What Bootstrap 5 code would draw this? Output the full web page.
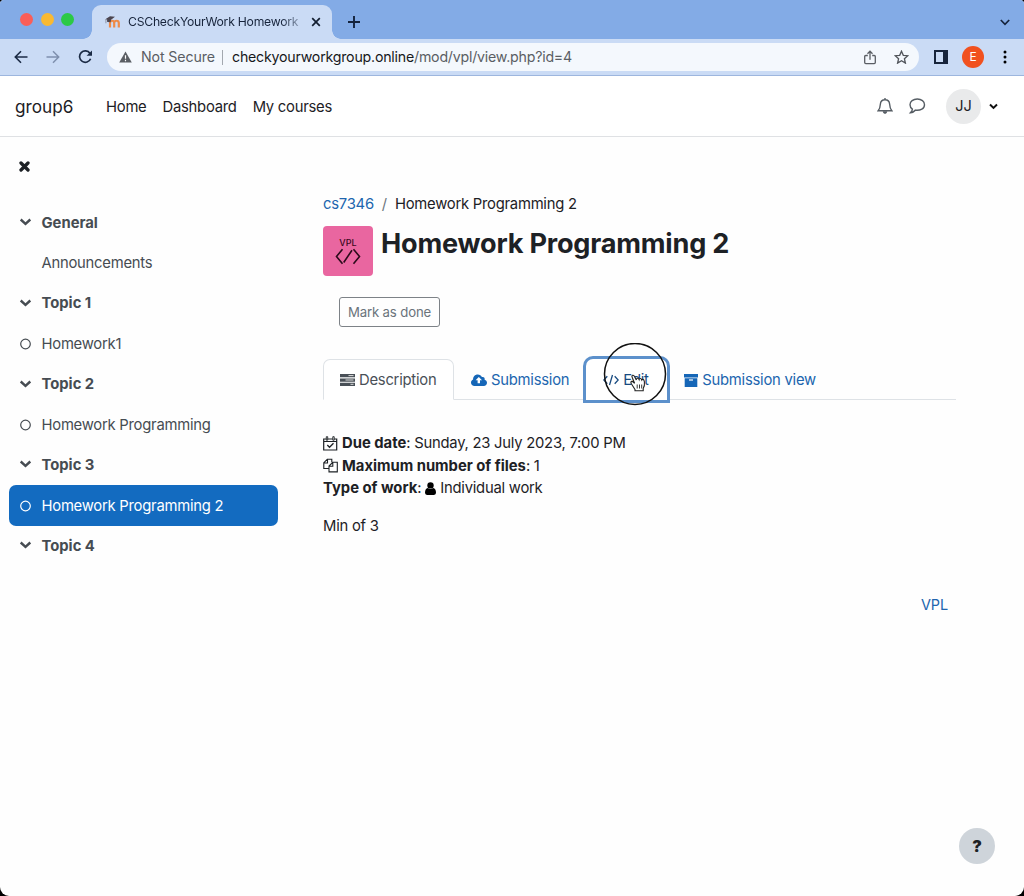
<!DOCTYPE html>
<html lang="en">
<head>
<meta charset="utf-8">
<title>CSCheckYourWork Homework</title>
<link href="https://cdn.jsdelivr.net/npm/bootstrap@5.3.0/dist/css/bootstrap.min.css" rel="stylesheet">
<style>
body{font-family:Inter,"Liberation Sans",sans-serif;font-size:14.8px;line-height:22.3px;letter-spacing:-.24px;color:#1d2125;background:#000;height:896px;overflow:hidden}
b,.fw-bold{letter-spacing:0}
svg{display:block;flex:none}
a{text-decoration:none}
.window{height:896px;background:#fefefe;border-radius:4px 4px 9px 9px;overflow:hidden}
.tabstrip{height:39px;background:#83abe6;padding-left:20px}
.light-dot{width:13px;height:13px;border-radius:50%}
.browser-tab{height:34px;width:240px;margin-left:18px;background:#cadbf5;border-radius:9px 9px 0 0;padding-left:13px;font-size:12.2px;color:#17243b;position:relative}
.browser-tab::before,.browser-tab::after{content:"";position:absolute;bottom:0;width:9px;height:9px}
.browser-tab::before{left:-9px;background:radial-gradient(circle at 0 0,transparent 8.5px,#cadbf5 9px)}
.browser-tab::after{right:-9px;background:radial-gradient(circle at 100% 0,transparent 8.5px,#cadbf5 9px)}
.tab-title{width:174px;margin-left:7px;white-space:nowrap;-webkit-mask-image:linear-gradient(90deg,#000 88%,transparent 104%)}
.toolbar{height:37px;background:#cadbf5;border-bottom:1px solid #9db6de;padding-left:14px}
.address{width:812px;height:28px;border-radius:14px;background:#f4f8fd;padding-left:12px;font-size:14.2px;letter-spacing:-.22px;color:#5a5e64}
.profile-dot{width:22px;height:22px;border-radius:50%;background:#f1511f;color:#fff;font-size:12px}
.site-nav{height:61px;border-bottom:1px solid #dfe1e4;padding-left:15px;background:#fff}
.site-nav>span:not(.initials){padding-top:2px}
.brand{font-size:17.2px;width:91px;letter-spacing:0}
.initials{width:35px;height:35px;background:#e9eaeb;font-size:14.5px;letter-spacing:0}
.drawer{width:286px;padding:21px 9px 0;color:#464c52}
.index-row{height:40.38px;padding-left:10px;border-radius:7px}
.index-row .mark-slot{width:13px;margin-right:9.5px;flex:none}
.index-row:not(.fw-bold) span:last-child{padding-top:1px}
.index-row.current{background:#136bc0;color:#fff;width:268.500px}
.content-area{width:633px;margin-left:37px;padding-top:56px}
.blue{color:#2065ae}
.vpl-tile{width:50px;height:50px;border-radius:4px;background:#e966a0}
.page-title{font-size:27.1px;line-height:36px;font-weight:700;letter-spacing:-.2px}
.done-btn{width:101px;height:30px;border:1px solid #7d8287;border-radius:3px;color:#6a737b;font-size:13.2px;letter-spacing:-.15px;margin:20px 0 0 16px}
.tabs-row{height:40.500px;margin-top:32px;border-bottom:1px solid #dee2e6}
.tab-item{height:41px;gap:4px;padding-top:1px}
.tab-item.selected{width:131px;padding-left:16px;border:1px solid #dee2e6;border-bottom-color:#fff;border-radius:7px 7px 0 0;color:#495057;background:#fff}
.tab-item.focused{width:81px;height:41px;margin-left:17px;padding-left:17px;border-radius:7px 7px 0 0;box-shadow:0 0 0 3px #5c90cb;color:#174a80}
.pointer-ring{position:absolute;left:603px;top:343px;z-index:3}
.help-btn{position:absolute;left:959px;top:828px;width:36px;height:36px;border-radius:50%;background:#ced4da;font-size:16px;font-weight:900;padding-top:1px}
</style>
</head>
<body>
<div class="window">
  <div class="tabstrip d-flex align-items-center">
    <div class="d-flex" style="gap:7.5px">
      <span class="light-dot" style="background:#fa5e58"></span>
      <span class="light-dot" style="background:#f9b932"></span>
      <span class="light-dot" style="background:#2bc945"></span>
    </div>
    <div class="browser-tab d-flex align-items-center align-self-end">
      <svg width="16" height="14" viewBox="0 0 16 14"><path d="M5 12.500V8c0-3 4.200-3 4.200 0v4.500M9.200 8c0-3 4.600-3 4.600 0v4.500" fill="none" stroke="#ee8b48" stroke-width="2.200"/><path d="M.3 4.300 5 1.200l5 .5-4.600 3.600zM2 4.500l4 .3-.4 2.400-3.400-.3z" fill="#4c4650"/><path d="M.9 4.300v4" stroke="#6a6570" stroke-width=".6"/></svg>
      <span class="tab-title">CSCheckYourWork Homework</span>
      <svg style="margin-left:9px" width="10" height="10" viewBox="0 0 10 10"><path d="m1.200 1.200 7.600 7.600m0-7.600L1.200 8.800" stroke="#131e30" stroke-width="1.700"/></svg>
    </div>
    <svg style="margin:5px 0 0 16px" width="12" height="12" viewBox="0 0 12 12"><path d="M6 0v12M0 6h12" stroke="#14233d" stroke-width="1.900"/></svg>
    <svg class="ms-auto" style="margin:5px 14px 0 0" width="10" height="7" viewBox="0 0 10 7"><path d="m.8 1 4.200 4.300L9.200 1" fill="none" stroke="#15233b" stroke-width="1.700"/></svg>
  </div>
  <div class="toolbar d-flex align-items-center">
    <svg width="14" height="14" viewBox="0 0 14 14"><path d="M13.500 7H1.500M7 1.300 1.300 7 7 12.700" fill="none" stroke="#1b2b45" stroke-width="1.600"/></svg>
    <svg style="margin-left:18px" width="14" height="14" viewBox="0 0 14 14"><path d="M.5 7h12M7 1.300 12.700 7 7 12.700" fill="none" stroke="#7f90ae" stroke-width="1.500"/></svg>
    <svg style="margin-left:18px" width="15" height="14" viewBox="0 0 15 14"><path d="M12.600 8.700A5.700 5.700 0 1 1 12 3.400" fill="none" stroke="#1b2b45" stroke-width="1.700"/><path d="M14 .4v5.400H8.600z" fill="#1b2b45"/></svg>
    <div class="address d-flex align-items-center" style="margin-left:14px">
      <svg width="13" height="12" viewBox="0 0 13 12"><path d="M6.500.4 12.800 11.600H.2z" fill="#5a5e64"/><path d="M6.500 4.200v3.600M6.500 8.800v1.400" stroke="#fff" stroke-width="1.200"/></svg>
      <span style="margin-left:9px;width:81px;white-space:nowrap;letter-spacing:-.13px">Not Secure</span>
      <span style="width:1px;height:15px;background:#a3a8af"></span>
      <span style="margin-left:9px"><span style="color:#17191c">checkyourworkgroup.online</span>/mod/vpl/view.php?id=4</span>
      <svg class="ms-auto" width="12" height="15" viewBox="0 0 12 15"><path d="M3.800 5.500H1.800Q.7 5.500.7 6.600v6q0 1.100 1.100 1.100h8.400q1.100 0 1.100-1.100v-6q0-1.100-1.100-1.100h-2M6 9.700V1.500M3.500 3.800 6 1.200l2.500 2.600" fill="none" stroke="#5a5e64" stroke-width="1.300"/></svg>
      <svg style="margin:0 10.500px 0 18px" width="15" height="14" viewBox="0 0 15 14"><path d="m7.500 1.200 1.800 4.100 4.500.4-3.400 3 1 4.400-3.900-2.300-3.900 2.300 1-4.400-3.400-3 4.500-.4z" fill="none" stroke="#50545a" stroke-width="1.300"/></svg>
    </div>
    <svg style="margin-left:15px" width="14" height="14" viewBox="0 0 14 14"><path d="M1 1h12v12H1z" fill="none" stroke="#17243b" stroke-width="2"/><path d="M9 1h4v12H9z" fill="#17243b"/></svg>
    <span class="profile-dot d-flex align-items-center justify-content-center" style="margin-left:14px">E</span>
    <svg style="margin-left:19px" width="4" height="14" viewBox="0 0 4 14"><circle cx="2" cy="2" r="1.500"/><circle cx="2" cy="7" r="1.500"/><circle cx="2" cy="12" r="1.500"/></svg>
  </div>
  <nav class="site-nav d-flex align-items-center">
    <span class="brand">group6</span>
    <span style="margin-right:16px">Home</span><span style="margin-right:16px">Dashboard</span><span>My courses</span>
    <svg class="ms-auto" width="16" height="18" viewBox="0 0 16 18"><path d="M8 1v1.500M1.200 13.700c1.800-1.900 2-3.500 2.200-6.700C3.600 4.100 5.300 2.700 8 2.700S12.400 4.100 12.600 7c.2 3.200.4 4.800 2.200 6.700z" fill="none" stroke="#565d64" stroke-width="1.400"/><path d="M5.700 14.300h4.600Q10 17 8 17t-2.300-2.700z" fill="#565d64"/></svg>
    <svg style="margin-left:15px" width="18" height="18" viewBox="0 0 18 16" preserveAspectRatio="none"><path d="M9.300 1.800c-4.200 0-7.300 2.300-7.300 5 0 1.700 1 3 2.400 3.900-.2 1.500-.8 2.300-1.800 3.200 2 0 3.400-.8 4.800-2.200 5.100.6 9.100-1.500 9.100-4.900 0-2.700-3-5-7.200-5z" fill="none" stroke="#565d64" stroke-width="1.400"/></svg>
    <span class="initials rounded-circle d-flex align-items-center justify-content-center" style="margin-left:20px">JJ</span>
    <svg style="margin:0 26px 0 8px" width="9" height="7" viewBox="0 0 9 7"><path d="m1 1.500 3.500 3.400L8 1.500" fill="none" stroke="#111" stroke-width="2"/></svg>
  </nav>
  <div class="d-flex">
    <aside class="drawer">
      <svg style="margin:3px 0 30.500px 10px" width="11" height="11" viewBox="0 0 11 11"><path d="m2 2 7 7m0-7L2 9" stroke="#1d2125" stroke-width="3.300" stroke-linecap="round"/></svg>
      <div id="courseIndex"></div>
    </aside>
    <main class="content-area">
      <div class="d-flex"><a class="blue">cs7346</a><span class="text-secondary" style="margin:0 8px">/</span><span>Homework Programming 2</span></div>
      <div class="d-flex" style="margin-top:11px">
        <div class="vpl-tile d-flex flex-column align-items-center">
          <span style="font-size:9px;line-height:10px;margin-top:12px;letter-spacing:.1px;color:#3b0920;font-weight:500">VPL</span>
          <svg width="26" height="17" viewBox="0 0 26 17"><path d="M7.500 1.200 1.500 8.500l6 7.300M18.500 1.200l6 7.300-6 7.300M17 2.200 8.700 14.500" fill="none" stroke="#2b0b1a" stroke-width="1.600"/></svg>
        </div>
        <h1 class="page-title m-0 ms-2">Homework Programming 2</h1>
      </div>
      <div class="done-btn d-flex align-items-center justify-content-center" style="margin-top:21px">Mark as done</div>
      <div class="tabs-row d-flex">
        <div class="tab-item selected d-flex align-items-center">
          <svg width="15" height="12" viewBox="0 0 15 12"><path d="M0 0h15v3.300H0zM0 4.400h15v3.300H0zM0 8.700h15V12H0z" fill="#495057"/><path d="M8.500 1.600h5M5.500 6h8M10.500 10.300h3" stroke="#ddd" stroke-width="1"/></svg>Description</div>
        <a class="tab-item blue d-flex align-items-center" style="margin-left:17px">
          <svg width="16" height="12" viewBox="0 0 16 12"><path d="M3.500 12C1.500 12 0 10.500 0 8.700 0 7.200.9 6.200 2.100 5.600 1.900 2.500 4 .4 6.700.4c2 0 3.500 1 4.200 2.700 1.700-.7 3.300.8 2.700 2.600 1.400.3 2.400 1.500 2.400 3 0 1.900-1.400 3.300-3.200 3.300z" fill="#1566b7"/><path d="M7.800 2.900 11 6.200H9v3.100H6.600V6.200h-2z" fill="#fff"/></svg>Submission</a>
        <a class="tab-item focused bg-white d-flex align-items-center">
          <svg width="16" height="12" viewBox="0 0 16 12"><path d="M4.300 2.300.8 6l3.500 3.700M11.700 2.300 15.200 6l-3.500 3.700M9.500 1 6.500 11" fill="none" stroke="#174a80" stroke-width="1.300"/></svg>Edit</a>
        <a class="tab-item blue d-flex align-items-center" style="margin-left:17px">
          <svg width="14" height="13" viewBox="0 0 14 13"><path d="M0 0h14v3.500H0zM.7 4.300h12.600V13H.7z" fill="#1566b7"/><path d="M5 6h4" stroke="#fff" stroke-width="1.200"/></svg>Submission view</a>
      </div>
      <div style="padding-top:32.700px">
        <div class="d-flex align-items-center"><svg style="margin-right:4px" width="15" height="15" viewBox="0 0 15 15"><path d="M.7 3h13v11H.7zM.7 5.500h13" fill="none" stroke="#1d2125" stroke-width="1.200"/><path d="M3.300.7h1.400v3.500H3.300zM9.800.7h1.400v3.500H9.800z" fill="#fff" stroke="#1d2125" stroke-width=".9"/><path d="m4.300 9 2.200 2.300 4-4" fill="none" stroke="#1d2125" stroke-width="1.300"/></svg><b>Due date</b>:&nbsp;<span>Sunday, 23 July 2023, 7:00 PM</span></div>
        <div class="d-flex align-items-center"><svg style="margin-right:4px" width="15" height="15" viewBox="0 0 15 15"><path d="M5.500 10.500H.8V4.800L4.300 1.200h4.500v3M4.500 1.200V5H.8M9.800 4.300h4.500v9.600H6V8zM9.800 4.300v4H6" fill="none" stroke="#1d2125" stroke-width="1.100"/></svg><b>Maximum number of files</b>:&nbsp;<span>1</span></div>
        <div class="d-flex align-items-center"><b>Type of work</b>:<svg style="margin:0 4px 0 4px" width="11" height="13" viewBox="0 0 11 13"><circle cx="5.500" cy="3.400" r="3.200"/><path d="M2.800 6q2.700 2 5.400 0Q11 6.600 11 10.800q0 2.100-2 2.100H2q-2 0-2-2.100Q0 6.600 2.800 6z"/></svg><span>Individual work</span></div>
        <div style="margin-top:16px">Min of 3</div>
        <div class="text-end" style="margin:56.500px 8px 0 0"><a class="blue" style="font-size:14.400px;letter-spacing:-.1px">VPL</a></div>
      </div>
    </main>
  </div>
</div>
<svg class="pointer-ring" width="64" height="64" viewBox="0 0 64 64"><circle cx="32" cy="31" r="30.500" fill="none" stroke="#111" stroke-width="1.500"/><path transform="translate(1 3)" d="M31 43.500 27.500 38q-1.300-2.200.2-2.600 1.200-.2 2.900 1.900l-2.500-6.200q-.5-1.500.6-1.800 1.200-.3 1.800 1.200l1.800 3.600q-.1-1.800 1.100-1.900 1.100-.1 1.700 1.400.2-1.100 1.200-1.100 1 0 1.500 1.500.4-.9 1.300-.6 1 .3 1.300 2.500.5 4-1.200 6.600v2.300H31z" fill="#fff" stroke="#222" stroke-width="1.100"/><path transform="translate(1 3)" d="M33.200 38.500v4M35.500 38.500v4M37.700 38.500v4" stroke="#222" stroke-width=".9"/></svg>
<div class="help-btn d-flex align-items-center justify-content-center">?</div>
<script>
const rows=[["h","General"],["","Announcements"],["h","Topic 1"],["o","Homework1"],["h","Topic 2"],["o","Homework Programming"],["h","Topic 3"],["c","Homework Programming 2"],["h","Topic 4"]];
const chevron='<svg width="13" height="9" viewBox="0 0 13 9"><path d="m1.700 1.500 4.800 4.400 4.800-4.400" fill="none" stroke="#464c52" stroke-width="2.400"/></svg>';
const ring='<svg width="13" height="13" viewBox="0 0 13 13"><circle cx="6.500" cy="7" r="4.800" fill="none" stroke="currentColor" stroke-width="1.200"/></svg>';
document.getElementById("courseIndex").innerHTML=rows.map(([k,t])=>`<div class="index-row d-flex align-items-center ${k==="h"?"fw-bold":""} ${k==="c"?"current":""}"><span class="mark-slot">${k==="h"?chevron:k?ring:""}</span><span>${t}</span></div>`).join("");
</script>
<script src="https://cdn.jsdelivr.net/npm/bootstrap@5.3.0/dist/js/bootstrap.bundle.min.js"></script>
</body>
</html>
